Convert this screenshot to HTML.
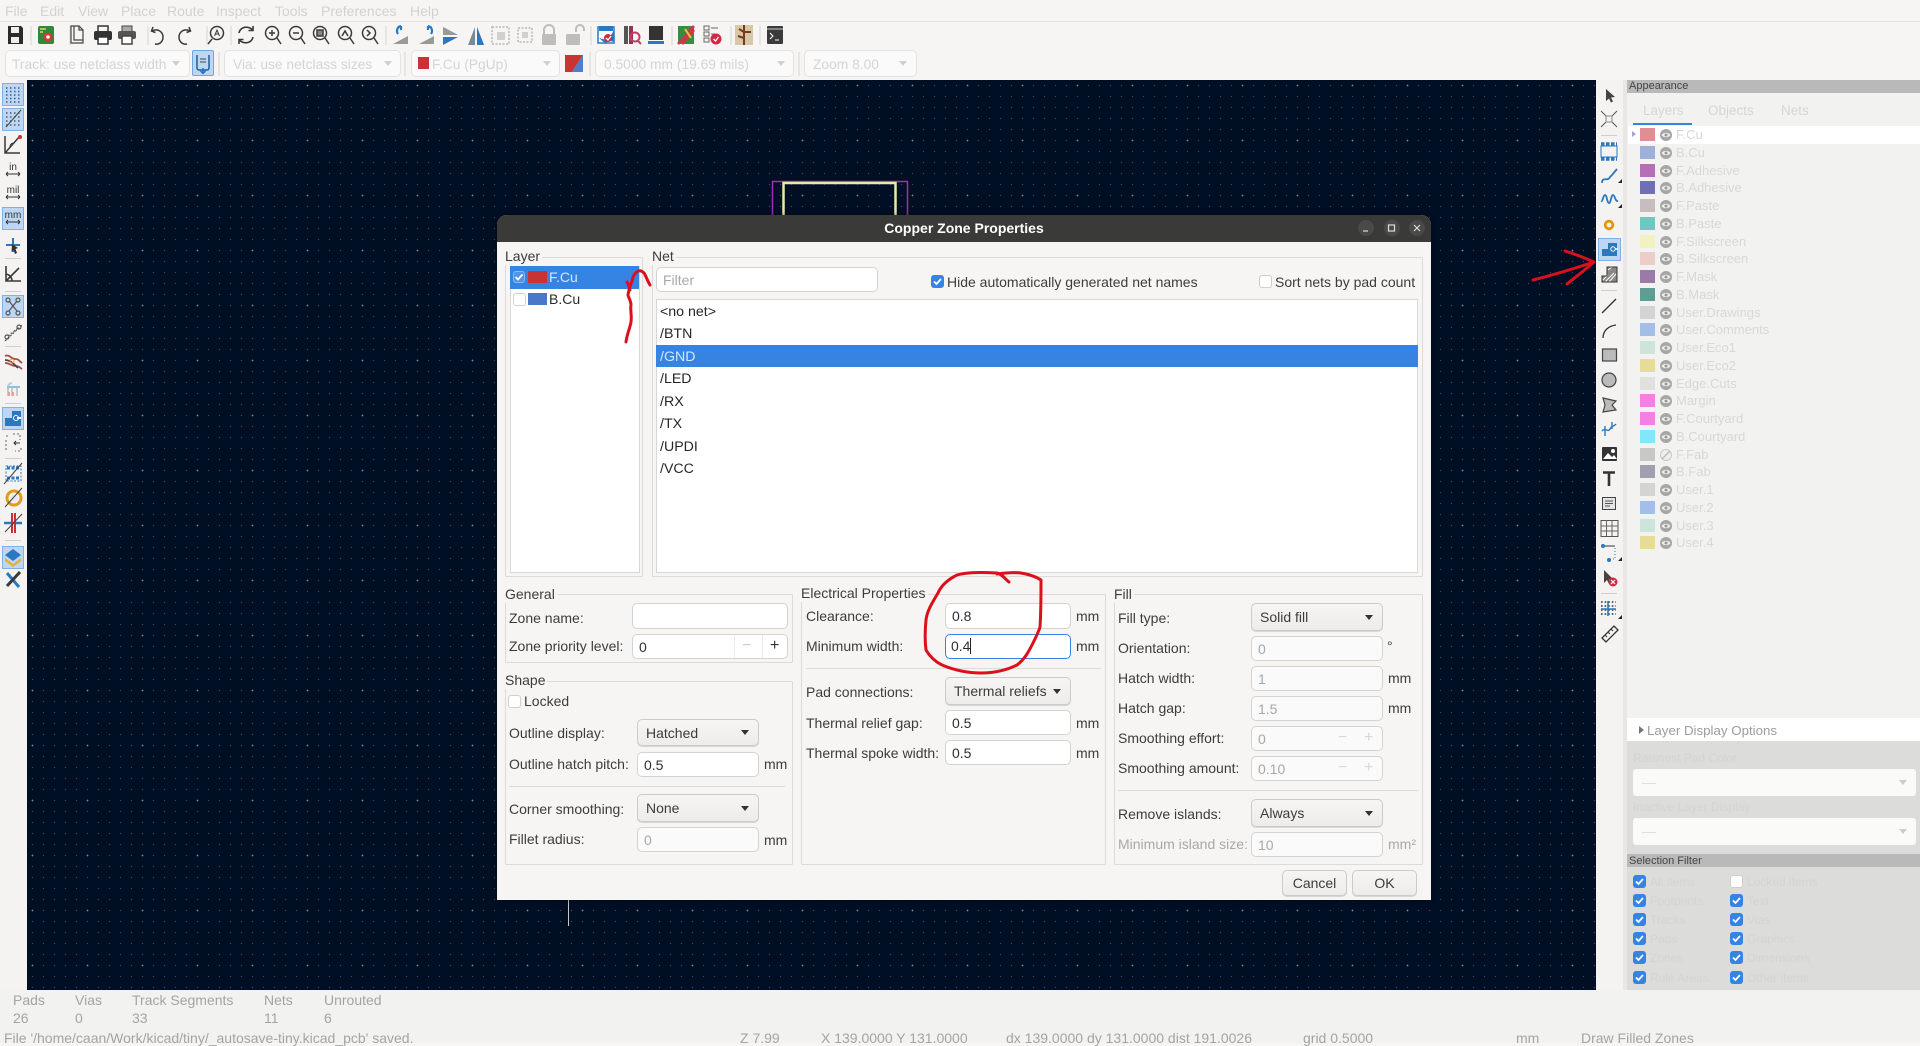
<!DOCTYPE html>
<html><head><meta charset="utf-8"><style>
html,body{margin:0;padding:0;width:1920px;height:1043px;overflow:hidden;background:#f6f5f4;font-family:"Liberation Sans",sans-serif;font-size:14px;color:#3a3a3a}
div,span{position:absolute;box-sizing:border-box;white-space:nowrap}
.m{top:2px;color:#d2d2d2;font-size:14px;line-height:18px}
.c{top:50px;height:27px;background:#fbfafa;border:1px solid #e3e2e0;border-radius:5px}
.ct{top:56px;color:#d4d4d4;font-size:13.8px;line-height:18px}
.ca{top:61px;width:0;height:0;border:4px solid transparent;border-top:5px solid #d0d0d0;border-bottom:0}
.st{color:#a4a4a4;font-size:14px;line-height:16px}
#canvas{left:27px;top:80px;width:1569px;height:910px;background-color:#010f24;background-image:radial-gradient(circle at 5.5px 5.5px,#7c8894 .7px,transparent 1px),radial-gradient(circle at 5.5px 5.5px,#3b4856 .55px,transparent .85px);background-size:55px 55px,11px 11px}
.l{font-size:14px;line-height:18px;color:#3c3c3c;margin-top:1px}
.g{border:1px solid #dcdbd8;border-radius:1px}
.i{background:#fff;border:1px solid #d5d3cf;border-radius:5px;font-size:14px;color:#2e2e2e;line-height:24px;padding-left:6px}
.d{background:#fafafa;color:#a8a8a8}
.b{background:linear-gradient(#f6f5f4,#edecea);border:1px solid #cdcbc7;border-radius:5px;font-size:14px;color:#3c3c3c;line-height:27px;padding-left:8px;box-shadow:0 1px 0 #d8d6d2}
.a{width:0;height:0;border:4.5px solid transparent;border-top:5px solid #333;border-bottom:0}
.n{left:660px;font-size:14.2px;line-height:18px;color:#262626;margin-top:1px}
.r{left:0;width:293px;height:17.75px}
.r b{position:absolute;left:13px;top:2px;width:15px;height:13px}
.r i{position:absolute;left:49px;top:0;font-style:normal;font-size:13px;line-height:18px;color:#d8d8d8}
.r svg{position:absolute;left:33px;top:3px}
.ck{width:13px;height:13px;background:#3584e4;border-radius:3px}
.ck svg{position:absolute;left:0;top:0}
.sf{font-size:12px;line-height:14px;color:#d4d4d3}
.u{background:#fff;border:1px solid #d0cfcb;border-radius:3px;width:13px;height:13px}
</style></head><body>

<div style="left:0;top:21px;width:1920px;height:1px;background:#e4e3e0"></div>
<span class="m" style="left:5px">File</span><span class="m" style="left:40px">Edit</span><span class="m" style="left:78px">View</span><span class="m" style="left:121px">Place</span><span class="m" style="left:167px">Route</span><span class="m" style="left:216px">Inspect</span><span class="m" style="left:275px">Tools</span><span class="m" style="left:321px">Preferences</span><span class="m" style="left:410px">Help</span>

<div class="c" style="left:5px;width:185px"></div><span class="ct" style="left:12px">Track: use netclass width</span><div class="ca" style="left:172px"></div>
<div style="left:192px;top:50px;width:22px;height:26px;background:#bcd6f4;border:1px solid #6fa5e4;border-radius:2px"></div>
<div class="c" style="left:224px;width:177px"></div><span class="ct" style="left:233px">Via: use netclass sizes</span><div class="ca" style="left:384px"></div>
<div class="c" style="left:411px;width:149px"></div><div style="left:418px;top:57px;width:11px;height:12px;background:#c83434"></div><span class="ct" style="left:432px">F.Cu (PgUp)</span><div class="ca" style="left:543px"></div>
<div class="c" style="left:595px;width:199px"></div><span class="ct" style="left:604px">0.5000 mm (19.69 mils)</span><div class="ca" style="left:777px"></div>
<div class="c" style="left:804px;width:113px"></div><span class="ct" style="left:813px">Zoom 8.00</span><div class="ca" style="left:899px"></div>

<div id="canvas"></div>
<div style="left:1596px;top:80px;width:27px;height:910px;background:#f4f3f2"></div>
<div style="left:0;top:80px;width:27px;height:910px;background:#f4f3f2"></div>

<svg style="position:absolute;left:0;top:0" width="1920" height="1043" fill="none">
<!-- track width button icon -->
<path d="M197 55v13a2 2 0 0 0 2 2h8a2 2 0 0 0 2-2V55" stroke="#1f5f9f" stroke-width="1.500"/><path d="M200 59h6M200 62h6" stroke="#444"/><path d="M203 68v5M200.500 71l2.500 2.500 2.500-2.500" stroke="#1f6fc0" stroke-width="1.400"/>
<!-- layer pair swatch -->
<path d="M565 55H583L572 72H565Z" fill="#c83434"/><path d="M583 55V72H572Z" fill="#4a80d0"/>
<!-- canvas board -->
<rect x="772.500" y="181.500" width="135" height="100" stroke="#a32cb0" stroke-width="1.500"/>
<rect x="783.500" y="183" width="112" height="100" stroke="#e8e8a8" stroke-width="2.500"/>
<path d="M568.500 900v26" stroke="#c8c8c8"/>
<!-- top toolbar separators -->
<path d="M31 26v19M70 26v19M148 26v19M207 26v19M231 26v19M386 26v19M591 26v19M672 26v19M731 26v19M760 26v19M405 52v24M219 52v24M590 52v24M799 52v24" stroke="#d6d5d2"/>
<!-- save -->
<g transform="translate(15,35)"><path d="M-7-9H6L8-7V9H-7Z" fill="#2b2b2b"/><rect x="-4" y="-8" width="8" height="6" fill="#eee"/><rect x="-4" y="2" width="8" height="6" fill="#eee"/></g>
<g transform="translate(46,35)"><rect x="-8" y="-9" width="16" height="18" rx="2" fill="#2c8a3a"/><circle r="4.500" cx="2" cy="2" fill="#d03a3a"/><circle r="1.800" cx="2" cy="2" fill="#fff"/><path d="M-6-6h6M-6-3h3" stroke="#e8d35a" stroke-width="1.500"/></g>
<g transform="translate(77,35)" stroke="#444" stroke-width="1.200"><path d="M-6-9H2L6-5V8H-6Z" fill="#f6f5f4"/><path d="M-3-9V5H6M2-9V-5H6"/></g>
<g transform="translate(103,35)"><rect x="-5" y="-9" width="10" height="6" fill="#f6f5f4" stroke="#333" stroke-width="1.500"/><rect x="-9" y="-4" width="18" height="9" rx="2" fill="#333"/><rect x="-5" y="2" width="10" height="7" fill="#fff" stroke="#333" stroke-width="1.500"/></g>
<g transform="translate(127,35)"><rect x="-5" y="-9" width="10" height="6" fill="#aaa" stroke="#444"/><rect x="-9" y="-4" width="18" height="8" rx="2" fill="#555"/><rect x="-5" y="1" width="10" height="8" fill="#fff" stroke="#444" stroke-width="1.500"/></g>
<g stroke="#3a3a3a" stroke-width="1.500"><path d="M153 27l-1.500 4 4 1.500M152 31c6-3 11 1 11 6 0 5-4 8-8 7"/><path d="M189 27l1.500 4-4 1.500M190 31c-6-3-11 1-11 6 0 5 4 8 8 7"/></g>
<g stroke="#3a3a3a" stroke-width="1.500"><circle cx="217" cy="33" r="6.500" fill="#f6f5f4"/><path d="M212 39l-4 5"/></g><path d="M214.500 36l2.500-6 2.500 6M215.500 34h3" stroke="#3a3a3a"/>
<g stroke="#3a3a3a" stroke-width="1.600"><path d="M239 33c1-5 6-7 11-5l3 2M253 26v4.500h-4.500M253 37c-1 5-6 7-11 5l-3-2M239 44v-4.500h4.500"/></g>
<g stroke="#3a3a3a" stroke-width="1.500"><circle cx="272" cy="33" r="6.500"/><path d="M277 38l4 6M269 33h6M272 30v6"/><circle cx="296" cy="33" r="6.500"/><path d="M301 38l4 6M293 33h6"/><circle cx="320" cy="33" r="6.500"/><path d="M325 38l4 6"/><rect x="317" y="30" width="6" height="6" fill="#888"/><circle cx="345" cy="33" r="6.500"/><path d="M350 38l4 6M342 36l3-5 3 5" /><circle cx="369" cy="33" r="6.500"/><path d="M374 38l4 6M367 30l3 3-3 3" /></g>
<g transform="translate(401,35)"><path d="M-8 9L7 9 7 1Z" fill="#999"/><path d="M0-9c-4 1-5 5-3 8M0-9l-3 1M0-9l0 4" stroke="#2a78c0" stroke-width="2.200"/></g>
<g transform="translate(427,35)"><path d="M-8 9L7 9 7 1Z" fill="#999"/><path d="M1-9c4 1 5 5 3 8M1-9l3 1M1-9l0 4" stroke="#2a78c0" stroke-width="2.200"/></g>
<path d="M443 27l15 8-15 0ZM443 37h15l-15 8Z" fill="#2a78c0"/><path d="M443 27l15 8h-15Z" fill="#999"/>
<path d="M475 27l-7 18h7ZM477 27l7 18h-7Z" fill="#7a8a95"/><path d="M477 27l7 18h-7Z" fill="#2a78c0"/>
<g stroke="#b8b8b8" stroke-width="1.500" stroke-dasharray="2 1.500"><rect x="492" y="27" width="17" height="17"/><rect x="518" y="28" width="14" height="14"/></g><rect x="497" y="32" width="8" height="8" fill="#d0d0d0"/><rect x="522" y="32" width="6" height="6" fill="#d0d0d0"/>
<path d="M544 34v-4a5 5 0 0 1 10 0v4" stroke="#bdbdbd" stroke-width="2"/><rect x="542" y="34" width="14" height="11" rx="1" fill="#bdbdbd"/>
<path d="M576 32v-3a4 4 0 0 1 8 0v2" stroke="#bdbdbd" stroke-width="2"/><rect x="566" y="34" width="14" height="11" rx="1" fill="#bdbdbd"/>
<g transform="translate(606,35)"><path d="M-8-8H8V8H-8Z" fill="#fff" stroke="#2a78c0" stroke-width="1.500"/><path d="M-7-9h14v5h-14ZM-7 3l7 6 8-14v12z" fill="#2a78c0"/><circle cx="2" cy="3" r="4" fill="#cf2a42"/><path d="M0 3l2 2 3-4" stroke="#fff" stroke-width="1.300"/></g>
<g transform="translate(632,35)"><rect x="-8" y="-9" width="4" height="18" fill="#555"/><rect x="-3" y="-9" width="4" height="18" fill="#8a3a4a"/><circle cx="3" cy="2" r="4.500" stroke="#c83a6a" stroke-width="2"/><path d="M6 6l3 3" stroke="#c83a6a" stroke-width="2"/></g>
<g transform="translate(656,35)"><rect x="-7" y="-9" width="14" height="14" fill="#333"/><rect x="-8" y="6" width="16" height="3" fill="#2a78c0"/></g>
<g transform="translate(687,35)"><rect x="-9" y="-9" width="16" height="18" fill="#3c8a3e"/><path d="M-9 9L7-9M-5 9L7-5" stroke="#d0354a" stroke-width="2.500"/><path d="M-2-6L4 3" stroke="#e8c840" stroke-width="2"/></g>
<g transform="translate(712,35)"><rect x="-8" y="-9" width="5" height="4" stroke="#666"/><rect x="-8" y="-3" width="5" height="4" stroke="#666"/><rect x="-8" y="3" width="5" height="4" stroke="#666"/><path d="M-1-7h7M-1-1h4" stroke="#666"/><circle cx="4" cy="4" r="5.500" fill="#cf2a42"/><path d="M1.500 4l2 2 3-4" stroke="#fff" stroke-width="1.300"/></g>
<g transform="translate(744,35)"><rect x="-9" y="-10" width="18" height="20" fill="#d8c8a8"/><path d="M0-10V10M0-3h7M0 3l-6-2M0-3l-5-3" stroke="#7a3a20" stroke-width="2"/></g>
<g transform="translate(775,35)"><rect x="-8" y="-9" width="16" height="18" rx="1" fill="#3a3a3a"/><path d="M-8-6h16" stroke="#ccc"/><path d="M-5-2l3 3-3 3M0 5h4" stroke="#fff"/></g>

<!-- left toolbar -->
<g fill="#bcd6f4" stroke="#7fb0e6"><rect x="2.500" y="83.500" width="21" height="22"/><rect x="2.500" y="108.500" width="21" height="22"/><rect x="2.500" y="207.500" width="21" height="22"/><rect x="2.500" y="295.500" width="21" height="22"/><rect x="2.500" y="407.500" width="21" height="22"/><rect x="2.500" y="546.500" width="21" height="22"/></g>
<path d="M5 258.500h16M5 291.500h16M5 346.500h16M5 403.500h16M5 458.500h16M5 540.500h16" stroke="#d0cfcc"/>
<path d="M6 88h14M6 91.500h14M6 95h14M6 98.500h14M6 102h14" stroke="#2f5f8f" stroke-width="1.500" stroke-dasharray="1.500 2.500"/>
<path d="M6 113h14M6 117h14M6 121h14M6 125h14" stroke="#556" stroke-width="1.500" stroke-dasharray="1.500 2.500"/><path d="M6 127l15-17" stroke="#444"/>
<path d="M5 153L20 136M5 136v17h15" stroke="#3a3a3a" stroke-width="1.500"/><circle cx="20" cy="137" r="2" fill="#cf3030"/><path d="M10 147a4 4 0 0 1 3-4" stroke="#333"/>
<g font-family="Liberation Sans" font-size="10" fill="#333" text-anchor="middle"><text x="13" y="170">in</text><text x="13" y="193">mil</text><text x="13" y="218">mm</text></g>
<path d="M6 174h14M6 197h14M6 222h14M6 174l2-2M6 174l2 2M20 174l-2-2M20 174l-2 2M6 197l2-2M6 197l2 2M20 197l-2-2M20 197l-2 2M6 222l2-2M6 222l2 2M20 222l-2-2M20 222l-2 2" stroke="#333"/>
<path d="M13 238v14M6 245h14" stroke="#2a78c0" stroke-width="2"/><path d="M12 244l6 4-2.500 1 1.500 4-2 1-1.500-4-2 2Z" fill="#333"/>
<path d="M6 266v15h15M6 281l13-13M6 274a7 7 0 0 1 6 7" stroke="#3a3a3a" stroke-width="1.600"/>
<g stroke="#555" stroke-width="1.200"><circle cx="8" cy="300" r="2"/><circle cx="18" cy="300" r="2"/><circle cx="8" cy="313" r="2"/><circle cx="18" cy="313" r="2"/><path d="M9 301l8 10M17 301l-8 10"/></g>
<g stroke="#555" stroke-width="1.200"><circle cx="7" cy="337" r="2"/><circle cx="19" cy="327" r="2"/><path d="M8 336l10-8M5 341l17-16" stroke-dasharray="2 1.500"/></g>
<path d="M5 356c5-2 6 3 10 3s4 2 7 4M5 363c5 0 6 3 10 3s4 1 7 3" stroke="#b04a4a" stroke-width="1.800"/><path d="M5 360c4 0 7 2 13 8" stroke="#444" stroke-width="1.800"/><circle cx="12" cy="361" r="2" stroke="#e0a030"/>
<path d="M8 396v-9a4 4 0 0 1 4-4M12 396v-9M17 396v-9" stroke="#c8c8c8" stroke-width="2"/><path d="M7 387h13" stroke="#8ac0ea" stroke-width="2"/><path d="M9 392v4M13 392v4" stroke="#e8a0a0" stroke-width="2"/>
<path d="M5 426v-8h7v-7h9v15Z" fill="#2a78c0"/><path d="M21 418h-4" stroke="#fff" stroke-width="2"/><circle cx="16" cy="418" r="2.500" stroke="#fff"/>
<path d="M6 450v-12M6 436h4M13 434h7v6M21 448v3h-6" stroke="#999" stroke-width="1.600" stroke-dasharray="2 2"/><path d="M20 443h-6M16 441l-2 2 2 2" stroke="#333"/>
<rect x="6" y="466" width="15" height="15" stroke="#2a78c0" stroke-dasharray="2 1.500"/><path d="M7 468h12M7 478h12" stroke="#2a78c0" stroke-width="3" stroke-dasharray="3 1.500"/><path d="M4 484l18-21" stroke="#444"/>
<circle cx="14" cy="498" r="7" fill="none" stroke="#e39a20" stroke-width="3"/><circle cx="14" cy="498" r="3.500" fill="#e8e8e8"/><path d="M5 507l17-19" stroke="#444"/>
<path d="M4 523h18" stroke="#2a78c0" stroke-width="2.500"/><path d="M12 513v20M15 513v20" stroke="#c83030" stroke-width="2"/><path d="M5 532l17-18" stroke="#444"/>
<path d="M13 549l8 6-8 6-8-6Z" fill="#2a78c0"/><path d="M5 558l8 6 8-6v3l-8 6-8-6Z" fill="#e6b030"/>
<path d="M7 573l12 14" stroke="#2a78c0" stroke-width="3"/><path d="M20 572l-13 14" stroke="#3a3a3a" stroke-width="3"/>

<!-- right toolbar -->
<path d="M1601 135.500h16M1601 290.500h16M1601 593.500h16" stroke="#d0cfcc"/>
<path d="M1606 89l0 12 3-2.500 2 4 2-1-2-4 4-.5Z" fill="#444"/>
<path d="M1601 111l16 16M1617 111l-16 16" stroke="#555"/><rect x="1606" y="116" width="6" height="6" stroke="#888" fill="#f4f3f2"/>
<rect x="1601" y="146" width="16" height="11" stroke="#2a78c0"/><path d="M1601 144h16M1601 159h16" stroke="#2a78c0" stroke-width="3.500" stroke-dasharray="3.500 1.500"/>
<path d="M1602 183c0-7 6-1 8-6l2-2 5-6" stroke="#2a78c0" stroke-width="1.800"/><path d="M1622 183v-4l-4 4Z" fill="#222"/>
<path d="M1601 201c2 1 2-6 4-6s2 8 4 8 2-8 4-8 2 7 5 6" stroke="#2a78c0" stroke-width="1.800"/><path d="M1622 208v-4l-4 4Z" fill="#222"/>
<circle cx="1609" cy="225" r="3.800" stroke="#e8930c" stroke-width="2.800"/>
<rect x="1598.500" y="238.500" width="22" height="22" fill="#bcd6f4" stroke="#7fb0e6"/>
<path d="M1602 256v-7h6v-6h9v13Z" fill="#2a78c0"/><circle cx="1613" cy="249" r="2.200" stroke="#fff"/><path d="M1615 249h3" stroke="#fff" stroke-width="1.500"/>
<path d="M1602 282v-6h5v-9h10v15Z" fill="#888"/><path d="M1603 280l5-5M1605 282l9-9M1609 282l7-8M1608 270l4-3" stroke="#fff"/><path d="M1602 282v-6h5v-9h10v15Z" stroke="#333"/>
<path d="M1602 313l14-14" stroke="#333" stroke-width="1.300"/><path d="M1603 338c0-7 5-12 13-13" stroke="#333" stroke-width="1.300"/>
<rect x="1602.500" y="349" width="14" height="12" fill="#bbb" stroke="#444" stroke-width="1.200"/>
<circle cx="1609" cy="380" r="7" fill="#bbb" stroke="#444" stroke-width="1.200"/>
<path d="M1603 398l13 3-4 4 4 5-13 2 2-7Z" fill="#bbb" stroke="#444" stroke-width="1.200"/>
<path d="M1602 431c3-4 6 2 8-2s4-2 6-5M1605 426v10M1612 422v7" stroke="#2a78c0" stroke-width="1.400"/>
<rect x="1602" y="447" width="15" height="14" rx="1" fill="#333"/><circle cx="1613" cy="451" r="2" fill="#fff"/><path d="M1603 459l5-6 4 4 2-2 3 4Z" fill="#fff"/>
<path d="M1603 472.500h12M1609 472v14" stroke="#333" stroke-width="2.600"/>
<rect x="1602.500" y="497.500" width="13" height="12" fill="#e4e4e4" stroke="#444"/><path d="M1605 501h8M1605 503.500h8M1605 506h5" stroke="#555"/>
<rect x="1601" y="520.500" width="17" height="16" stroke="#555"/><path d="M1601 526h17M1601 531h17M1606.500 520v16M1612 520v16" stroke="#666"/>
<circle cx="1603" cy="546" r="2" fill="#2a78c0"/><circle cx="1609" cy="560" r="2" fill="#2a78c0"/><path d="M1605 546h10v13h-5" stroke="#2a78c0" stroke-dasharray="1 2"/><path d="M1605 546h10" stroke="#333"/><path d="M1622 561v-4l-4 4Z" fill="#222"/>
<path d="M1604 570v13l3-3 2 4 2-1-2-4h4Z" fill="#444"/><circle cx="1613" cy="582" r="4.500" fill="#cf2a42"/><path d="M1611 580l4 4M1615 580l-4 4" stroke="#fff" stroke-width="1.200"/>
<path d="M1601 602h15M1601 606h15M1601 610h15M1601 614h15" stroke="#333" stroke-width="1.600" stroke-dasharray="1.600 2"/><path d="M1608 601v15M1601 609h15" stroke="#2a78c0" stroke-width="1.600"/><path d="M1622 619v-4l-4 4Z" fill="#222"/>
<path d="M1602 638l12-12 4 4-12 12Z" fill="#f4f3f2" stroke="#333" stroke-width="1.300"/><path d="M1605 635l2 2M1608 632l2 2M1611 629l2 2" stroke="#333"/>
</svg>

<!-- Appearance -->
<div style="left:1623px;top:80px;width:4px;height:910px;background:#e8e7e5"></div>
<div style="left:1627px;top:80px;width:293px;height:638px;background:#f2f2f1"></div>
<div style="left:1627px;top:80px;width:293px;height:13px;background:#b9b9b9"></div><span style="left:1629px;top:80px;font-size:11px;line-height:13px;color:#444">Appearance</span>
<span style="left:1643px;top:102px;font-size:13.5px;line-height:18px;color:#d6d6d6">Layers</span><span style="left:1708px;top:102px;font-size:13.5px;line-height:18px;color:#d6d6d6">Objects</span><span style="left:1781px;top:102px;font-size:13.5px;line-height:18px;color:#d6d6d6">Nets</span>
<div style="left:1633px;top:123px;width:59px;height:2px;background:#3584e4"></div>
<div style="left:1628px;top:126px;width:292px;height:18px;background:#fff"></div>
<svg style="position:absolute;left:0;top:0;width:0;height:0"><defs><g id="e"><circle cx="6" cy="6" r="6" fill="#a6a6a6"/><path d="M1.500 6c2-3 7-3 9 0-2 3-7 3-9 0Z" fill="#eee"/><circle cx="6" cy="6" r="1.500" fill="#999"/></g></defs></svg>
<div style="left:1627px;top:126px;width:293px;height:430px">
<div class="r" style="top:0"><b style="background:#e08e94"></b><svg width="12" height="12"><use href="#e"/></svg><i>F.Cu</i></div>
<div class="r" style="top:17.750px"><b style="background:#9fb0d8"></b><svg width="12" height="12"><use href="#e"/></svg><i>B.Cu</i></div>
<div class="r" style="top:35.500px"><b style="background:#b56fb5"></b><svg width="12" height="12"><use href="#e"/></svg><i>F.Adhesive</i></div>
<div class="r" style="top:53.250px"><b style="background:#6f6fb8"></b><svg width="12" height="12"><use href="#e"/></svg><i>B.Adhesive</i></div>
<div class="r" style="top:71px"><b style="background:#c6bebe"></b><svg width="12" height="12"><use href="#e"/></svg><i>F.Paste</i></div>
<div class="r" style="top:88.750px"><b style="background:#6cc8c0"></b><svg width="12" height="12"><use href="#e"/></svg><i>B.Paste</i></div>
<div class="r" style="top:106.500px"><b style="background:#f2f2c0"></b><svg width="12" height="12"><use href="#e"/></svg><i>F.Silkscreen</i></div>
<div class="r" style="top:124.250px"><b style="background:#eccdc8"></b><svg width="12" height="12"><use href="#e"/></svg><i>B.Silkscreen</i></div>
<div class="r" style="top:142px"><b style="background:#9a7aa8"></b><svg width="12" height="12"><use href="#e"/></svg><i>F.Mask</i></div>
<div class="r" style="top:159.750px"><b style="background:#5f9c94"></b><svg width="12" height="12"><use href="#e"/></svg><i>B.Mask</i></div>
<div class="r" style="top:177.500px"><b style="background:#d4d4d4"></b><svg width="12" height="12"><use href="#e"/></svg><i>User.Drawings</i></div>
<div class="r" style="top:195.250px"><b style="background:#a3bfe8"></b><svg width="12" height="12"><use href="#e"/></svg><i>User.Comments</i></div>
<div class="r" style="top:213px"><b style="background:#cde4da"></b><svg width="12" height="12"><use href="#e"/></svg><i>User.Eco1</i></div>
<div class="r" style="top:230.750px"><b style="background:#e6dc96"></b><svg width="12" height="12"><use href="#e"/></svg><i>User.Eco2</i></div>
<div class="r" style="top:248.500px"><b style="background:#e0e0dc"></b><svg width="12" height="12"><use href="#e"/></svg><i>Edge.Cuts</i></div>
<div class="r" style="top:266.250px"><b style="background:#f57fe2"></b><svg width="12" height="12"><use href="#e"/></svg><i>Margin</i></div>
<div class="r" style="top:284px"><b style="background:#f57fe2"></b><svg width="12" height="12"><use href="#e"/></svg><i>F.Courtyard</i></div>
<div class="r" style="top:301.750px"><b style="background:#80e8fa"></b><svg width="12" height="12"><use href="#e"/></svg><i>B.Courtyard</i></div>
<div class="r" style="top:319.500px"><b style="background:#c8c8c8"></b><svg width="12" height="12"><circle cx="6" cy="6" r="5.500" stroke="#c8c8c8" fill="#efefef"/><path d="M2 10l8-8" stroke="#bbb" stroke-width="1.500"/></svg><i>F.Fab</i></div>
<div class="r" style="top:337.250px"><b style="background:#a0a0b0"></b><svg width="12" height="12"><use href="#e"/></svg><i>B.Fab</i></div>
<div class="r" style="top:355px"><b style="background:#d4d4d4"></b><svg width="12" height="12"><use href="#e"/></svg><i>User.1</i></div>
<div class="r" style="top:372.750px"><b style="background:#a3bfe8"></b><svg width="12" height="12"><use href="#e"/></svg><i>User.2</i></div>
<div class="r" style="top:390.500px"><b style="background:#cde4da"></b><svg width="12" height="12"><use href="#e"/></svg><i>User.3</i></div>
<div class="r" style="top:408.250px"><b style="background:#e6dc96"></b><svg width="12" height="12"><use href="#e"/></svg><i>User.4</i></div>
</div>
<div style="left:1632px;top:131px;width:0;height:0;border:3.500px solid transparent;border-left:4px solid #a0a0e0"></div>

<div style="left:1627px;top:718px;width:293px;height:23px;background:#fff"></div>
<div style="left:1639px;top:726px;width:0;height:0;border:4.500px solid transparent;border-left:5px solid #777"></div>
<span style="left:1647px;top:722px;font-size:13.300px;line-height:18px;color:#9c9c9c">Layer Display Options</span>
<div style="left:1627px;top:741px;width:293px;height:249px;background:#dcdcdb"></div>
<span class="sf" style="left:1633px;top:751px">Ratsnest Pad Color</span><span class="sf" style="left:1633px;top:800px">Inactive Layer Display</span>
<div style="left:1633px;top:769px;width:283px;height:27px;background:#fafaf9;border-radius:3px"></div><span style="left:1642px;top:774px;color:#ddd">—</span>
<div style="left:1633px;top:818px;width:283px;height:27px;background:#fafaf9;border-radius:3px"></div><span style="left:1642px;top:823px;color:#ddd">—</span>
<div style="left:1899px;top:780px;width:0;height:0;border:4px solid transparent;border-top:5px solid #ccc"></div>
<div style="left:1899px;top:829px;width:0;height:0;border:4px solid transparent;border-top:5px solid #ccc"></div>
<div style="left:1627px;top:854px;width:293px;height:13px;background:#b9b9b9"></div><span style="left:1629px;top:855px;font-size:11px;line-height:13px;color:#444">Selection Filter</span>

<div class="ck" style="left:1633px;top:875px"><svg width="13" height="13" fill="none"><path d="M3 6.500l2.500 2.500 4.500-5" stroke="#fff" stroke-width="1.800"/></svg></div><span class="sf" style="left:1650px;top:875px">All items</span>
<div class="u" style="left:1730px;top:875px"></div><span class="sf" style="left:1747px;top:875px">Locked items</span>
<div class="ck" style="left:1633px;top:894px"><svg width="13" height="13" fill="none"><path d="M3 6.500l2.500 2.500 4.500-5" stroke="#fff" stroke-width="1.800"/></svg></div><span class="sf" style="left:1650px;top:894px">Footprints</span>
<div class="ck" style="left:1730px;top:894px"><svg width="13" height="13" fill="none"><path d="M3 6.500l2.500 2.500 4.500-5" stroke="#fff" stroke-width="1.800"/></svg></div><span class="sf" style="left:1747px;top:894px">Text</span>
<div class="ck" style="left:1633px;top:913px"><svg width="13" height="13" fill="none"><path d="M3 6.500l2.500 2.500 4.500-5" stroke="#fff" stroke-width="1.800"/></svg></div><span class="sf" style="left:1650px;top:913px">Tracks</span>
<div class="ck" style="left:1730px;top:913px"><svg width="13" height="13" fill="none"><path d="M3 6.500l2.500 2.500 4.500-5" stroke="#fff" stroke-width="1.800"/></svg></div><span class="sf" style="left:1747px;top:913px">Vias</span>
<div class="ck" style="left:1633px;top:932px"><svg width="13" height="13" fill="none"><path d="M3 6.500l2.500 2.500 4.500-5" stroke="#fff" stroke-width="1.800"/></svg></div><span class="sf" style="left:1650px;top:932px">Pads</span>
<div class="ck" style="left:1730px;top:932px"><svg width="13" height="13" fill="none"><path d="M3 6.500l2.500 2.500 4.500-5" stroke="#fff" stroke-width="1.800"/></svg></div><span class="sf" style="left:1747px;top:932px">Graphics</span>
<div class="ck" style="left:1633px;top:951px"><svg width="13" height="13" fill="none"><path d="M3 6.500l2.500 2.500 4.500-5" stroke="#fff" stroke-width="1.800"/></svg></div><span class="sf" style="left:1650px;top:951px">Zones</span>
<div class="ck" style="left:1730px;top:951px"><svg width="13" height="13" fill="none"><path d="M3 6.500l2.500 2.500 4.500-5" stroke="#fff" stroke-width="1.800"/></svg></div><span class="sf" style="left:1747px;top:951px">Dimensions</span>
<div class="ck" style="left:1633px;top:971px"><svg width="13" height="13" fill="none"><path d="M3 6.500l2.500 2.500 4.500-5" stroke="#fff" stroke-width="1.800"/></svg></div><span class="sf" style="left:1650px;top:971px">Rule Areas</span>
<div class="ck" style="left:1730px;top:971px"><svg width="13" height="13" fill="none"><path d="M3 6.500l2.500 2.500 4.500-5" stroke="#fff" stroke-width="1.800"/></svg></div><span class="sf" style="left:1747px;top:971px">Other items</span>

<!-- status -->
<div style="left:0;top:990px;width:1920px;height:53px;background:#f2f2f1"></div>
<span class="st" style="left:13px;top:992px">Pads</span><span class="st" style="left:13px;top:1010px">26</span>
<span class="st" style="left:75px;top:992px">Vias</span><span class="st" style="left:75px;top:1010px">0</span>
<span class="st" style="left:132px;top:992px">Track Segments</span><span class="st" style="left:132px;top:1010px">33</span>
<span class="st" style="left:264px;top:992px">Nets</span><span class="st" style="left:264px;top:1010px">11</span>
<span class="st" style="left:324px;top:992px">Unrouted</span><span class="st" style="left:324px;top:1010px">6</span>
<span class="st" style="left:4px;top:1030px">File '/home/caan/Work/kicad/tiny/_autosave-tiny.kicad_pcb' saved.</span>
<span class="st" style="left:740px;top:1030px">Z 7.99</span><span class="st" style="left:821px;top:1030px">X 139.0000  Y 131.0000</span><span class="st" style="left:1006px;top:1030px">dx 139.0000  dy 131.0000  dist 191.0026</span><span class="st" style="left:1303px;top:1030px">grid 0.5000</span><span class="st" style="left:1516px;top:1030px">mm</span><span class="st" style="left:1581px;top:1030px">Draw Filled Zones</span>

<!-- dialog -->
<div style="left:497px;top:215px;width:934px;height:685px;background:#f6f5f4;border-radius:10px 10px 0 0;box-shadow:0 0 6px rgba(0,0,0,.4)"></div>
<div style="left:497px;top:215px;width:934px;height:27px;background:#3a3a38;border-radius:10px 10px 0 0"></div>
<span style="left:497px;width:934px;top:219px;text-align:center;color:#fff;font-weight:bold;font-size:14px;line-height:18px">Copper Zone Properties</span>
<div style="left:1358px;top:220px;width:16px;height:16px;border-radius:50%;background:#4a4a48"></div><div style="left:1384px;top:220px;width:16px;height:16px;border-radius:50%;background:#4a4a48"></div><div style="left:1409px;top:220px;width:16px;height:16px;border-radius:50%;background:#4a4a48"></div>
<svg style="position:absolute;left:1358px;top:220px" width="68" height="16" fill="none" stroke="#ddd" stroke-width="1.200"><path d="M5 11h5"/><rect x="30.500" y="5" width="6" height="6"/><path d="M56 5l6 6M62 5l-6 6"/></svg>

<div class="g" style="left:505px;top:257px;width:138px;height:320px"></div><span class="l" style="left:505px;top:246px;background:#f6f5f4;padding-right:2px">Layer</span>
<div style="left:510px;top:266px;width:130px;height:307px;background:#fff;border:1px solid #d8d7d3"></div>
<div style="left:510px;top:266px;width:129px;height:23px;background:#3584e4"></div>
<div style="left:513px;top:271px;width:12px;height:12px;background:#4d94ea;border:1px solid #8ab8f0;border-radius:3px"></div><svg style="position:absolute;left:513px;top:271px" width="12" height="12" fill="none"><path d="M2.500 6l2.500 2.500 4.500-5" stroke="#fff" stroke-width="1.800"/></svg>
<div style="left:528px;top:271px;width:19px;height:12px;background:#c83434"></div><span class="l" style="left:549px;top:267px;color:#d5e6fa">F.Cu</span>
<div class="u" style="left:513px;top:293px"></div><div style="left:528px;top:293px;width:19px;height:12px;background:#4a78c8"></div><span class="l" style="left:549px;top:289px;color:#2a2a2a">B.Cu</span>

<div class="g" style="left:652px;top:257px;width:771px;height:320px"></div><span class="l" style="left:652px;top:246px;background:#f6f5f4;padding-right:2px">Net</span>
<div class="i" style="left:656px;top:267px;width:222px;height:25px;color:#a8a8a8">Filter</div>
<div class="ck" style="left:931px;top:275px"><svg width="13" height="13" fill="none"><path d="M3 6.500l2.500 2.500 4.500-5" stroke="#fff" stroke-width="1.800"/></svg></div><span class="l" style="left:947px;top:272px">Hide automatically generated net names</span>
<div class="u" style="left:1259px;top:275px"></div><span class="l" style="left:1275px;top:272px">Sort nets by pad count</span>
<div style="left:656px;top:299px;width:762px;height:274px;background:#fff;border:1px solid #d8d7d3"></div>
<div style="left:656px;top:345px;width:762px;height:22px;background:#3584e4"></div>
<span class="n" style="top:302px">&lt;no net&gt;</span><span class="n" style="top:324px">/BTN</span><span class="n" style="top:347px;color:#d5e6fa">/GND</span><span class="n" style="top:369px">/LED</span><span class="n" style="top:392px">/RX</span><span class="n" style="top:414px">/TX</span><span class="n" style="top:437px">/UPDI</span><span class="n" style="top:459px">/VCC</span>

<!-- General -->
<div class="g" style="left:505px;top:594px;width:288px;height:69px"></div><span class="l" style="left:505px;top:584px;background:#f6f5f4;padding-right:2px">General</span>
<span class="l" style="left:509px;top:608px">Zone name:</span><div class="i" style="left:632px;top:603px;width:156px;height:26px"></div>
<span class="l" style="left:509px;top:636px">Zone priority level:</span><div class="i" style="left:632px;top:634px;width:156px;height:25px">0</div>
<span style="left:734px;top:635px;width:1px;height:23px;background:#eaeaea"></span><span style="left:762px;top:635px;width:1px;height:23px;background:#eaeaea"></span>
<span style="left:742px;top:637px;color:#c8c8c8;font-size:16px;line-height:18px">−</span><span style="left:770px;top:637px;color:#333;font-size:16px;line-height:18px">+</span>

<!-- Shape -->
<div class="g" style="left:505px;top:681px;width:288px;height:184px"></div><span class="l" style="left:505px;top:670px;background:#f6f5f4;padding-right:2px">Shape</span>
<div class="u" style="left:508px;top:695px"></div><span class="l" style="left:524px;top:691px">Locked</span>
<span class="l" style="left:509px;top:723px">Outline display:</span><div class="b" style="left:637px;top:719px;width:122px;height:27px">Hatched</div><div class="a" style="left:741px;top:730px"></div>
<span class="l" style="left:509px;top:754px">Outline hatch pitch:</span><div class="i" style="left:637px;top:752px;width:122px;height:25px">0.5</div><span class="l" style="left:764px;top:754px">mm</span>
<div style="left:509px;top:786px;width:276px;height:1px;background:#dcdbd8"></div>
<span class="l" style="left:509px;top:799px">Corner smoothing:</span><div class="b" style="left:637px;top:794px;width:122px;height:28px">None</div><div class="a" style="left:741px;top:806px"></div>
<span class="l" style="left:509px;top:829px">Fillet radius:</span><div class="i d" style="left:637px;top:827px;width:122px;height:25px">0</div><span class="l" style="left:764px;top:830px">mm</span>

<!-- Electrical -->
<div class="g" style="left:801px;top:594px;width:305px;height:271px"></div><span class="l" style="left:801px;top:583px;background:#f6f5f4;padding-right:2px">Electrical Properties</span>
<span class="l" style="left:806px;top:606px">Clearance:</span><div class="i" style="left:945px;top:603px;width:126px;height:26px">0.8</div><span class="l" style="left:1076px;top:606px">mm</span>
<span class="l" style="left:806px;top:636px">Minimum width:</span><div class="i" style="left:945px;top:634px;width:126px;height:25px;border:1.500px solid #3584e4;padding-left:5px;line-height:22px">0.4<span style="position:static;border-left:1px solid #222"></span></div><span class="l" style="left:1076px;top:636px">mm</span>
<div style="left:806px;top:668px;width:295px;height:1px;background:#dcdbd8"></div>
<span class="l" style="left:806px;top:682px">Pad connections:</span><div class="b" style="left:945px;top:677px;width:126px;height:28px">Thermal reliefs</div><div class="a" style="left:1053px;top:689px"></div>
<span class="l" style="left:806px;top:713px">Thermal relief gap:</span><div class="i" style="left:945px;top:710px;width:126px;height:25px">0.5</div><span class="l" style="left:1076px;top:713px">mm</span>
<span class="l" style="left:806px;top:743px">Thermal spoke width:</span><div class="i" style="left:945px;top:740px;width:126px;height:25px">0.5</div><span class="l" style="left:1076px;top:743px">mm</span>

<!-- Fill -->
<div class="g" style="left:1114px;top:594px;width:309px;height:271px"></div><span class="l" style="left:1114px;top:584px;background:#f6f5f4;padding-right:2px">Fill</span>
<span class="l" style="left:1118px;top:608px">Fill type:</span><div class="b" style="left:1251px;top:603px;width:132px;height:28px">Solid fill</div><div class="a" style="left:1365px;top:615px"></div>
<span class="l" style="left:1118px;top:638px">Orientation:</span><div class="i d" style="left:1251px;top:636px;width:132px;height:25px">0</div><span class="l" style="left:1387px;top:636px">°</span>
<span class="l" style="left:1118px;top:668px">Hatch width:</span><div class="i d" style="left:1251px;top:666px;width:132px;height:25px">1</div><span class="l" style="left:1388px;top:668px">mm</span>
<span class="l" style="left:1118px;top:698px">Hatch gap:</span><div class="i d" style="left:1251px;top:696px;width:132px;height:25px">1.5</div><span class="l" style="left:1388px;top:698px">mm</span>
<span class="l" style="left:1118px;top:728px">Smoothing effort:</span><div class="i d" style="left:1251px;top:726px;width:132px;height:25px">0</div><span style="left:1338px;top:729px;color:#d8d8d8;font-size:16px;line-height:18px">−</span><span style="left:1364px;top:729px;color:#d8d8d8;font-size:16px;line-height:18px">+</span>
<span class="l" style="left:1118px;top:758px">Smoothing amount:</span><div class="i d" style="left:1251px;top:756px;width:132px;height:25px">0.10</div><span style="left:1338px;top:759px;color:#d8d8d8;font-size:16px;line-height:18px">−</span><span style="left:1364px;top:759px;color:#d8d8d8;font-size:16px;line-height:18px">+</span>
<div style="left:1118px;top:790px;width:300px;height:1px;background:#dcdbd8"></div>
<span class="l" style="left:1118px;top:804px">Remove islands:</span><div class="b" style="left:1251px;top:799px;width:132px;height:28px">Always</div><div class="a" style="left:1365px;top:811px"></div>
<span class="l" style="left:1118px;top:834px;color:#a8a8a8">Minimum island size:</span><div class="i d" style="left:1251px;top:832px;width:132px;height:25px">10</div><span class="l" style="left:1388px;top:834px;color:#a8a8a8">mm²</span>
<div class="b" style="left:1282px;top:870px;width:65px;height:26px;padding:0;text-align:center;line-height:24px">Cancel</div><div class="b" style="left:1352px;top:870px;width:65px;height:26px;padding:0;text-align:center;line-height:24px">OK</div>

<!-- red annotations -->
<svg style="position:absolute;left:0;top:0" width="1920" height="1043" fill="none" stroke="#dc0f1c" stroke-width="3" stroke-linecap="round" stroke-linejoin="round">
<path d="M626 342c1-8 4-14 5-20 1-8-1-10 0-18-1-6-3-7-3-9 1-8 4-12 5-18 4-8 8-7 11-4 2 3 3 7 6 12"/><path d="M627 282c2 3 2 5 3 8"/>
<path d="M1009 582c-4-3-7-8-12-9-16-1-30-1-40 2-10 5-16 11-19 18-6 10-11 18-12 27-1 10-1 22 0 30 4 7 10 12 16 15 12 5 26 8 39 8 14 0 26-3 36-8 8-6 12-14 16-22 3-6 6-12 7-16 1-14 1-32 1-47-6-4-14-6-20-7-9-1-17 0-24 1"/>
<path d="M1533 280c20-5 40-11 61-18M1565 251c10 3 20 7 29 11-8 7-17 14-27 22"/>
</svg>
</body></html>
